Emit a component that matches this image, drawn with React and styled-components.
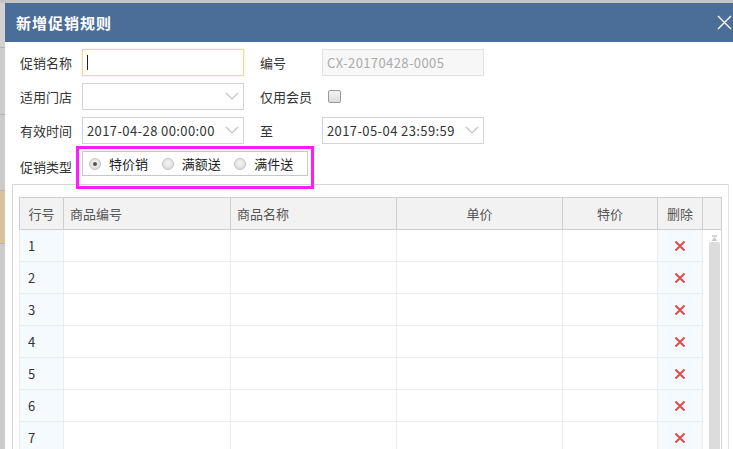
import React from "react";
import styled, { createGlobalStyle } from "styled-components";

const GlobalStyles = createGlobalStyle`
  html, body {
    margin: 0;
    padding: 0;
    overflow: hidden;
  }
  body {
    font-family: "Noto Sans CJK SC", "Noto Sans", sans-serif;
    font-size: 13px;
    color: #333;
  }
`;

const Page = styled.div`
  width: 733px;
  height: 449px;
  display: flex;
  align-items: flex-start;
  padding-top: 3px;
  box-sizing: border-box;
  background: #c4c4c4;
  overflow: hidden;
`;

const Strip = styled.div`
  width: 5px;
  flex-shrink: 0;
  display: flex;
  flex-direction: column;
  background: #d0d0d0;
`;

const StripBlock = styled.div`
  height: ${p => p.h}px;
  flex-shrink: 0;
  background: ${p => p.bg};
  border-bottom: 1px solid #b5b5b5;
`;

const Dialog = styled.div`
  width: 740px;
  flex-shrink: 0;
  background: #fff;
  display: flex;
  flex-direction: column;
  & > * {
    flex-shrink: 0;
  }
`;

const TitleBar = styled.div`
  height: 39px;
  background: #4a6e98;
  display: flex;
  align-items: center;
  justify-content: space-between;
  padding: 0 0 0 11px;
  color: #fff;
`;

const Title = styled.div`
  font-size: 15px;
  font-weight: 700;
  letter-spacing: 1px;
`;

const Close = styled.div`
  width: 28px;
  display: flex;
  align-items: center;
`;

const Form = styled.div`
  padding: 7px 0 0 15px;
  display: flex;
  flex-direction: column;
  gap: 7px;
`;

const Row = styled.div`
  display: flex;
  align-items: center;
  height: 27px;
`;

const Label = styled.div`
  width: 62px;
  flex-shrink: 0;
  color: #333;
`;

const Gap = styled.div`
  width: 16px;
`;

const Field = styled.div`
  width: 162px;
  height: 27px;
  box-sizing: border-box;
  border: 1px solid ${p => (p.focus ? "#f2d79a" : p.disabled ? "#e2e2e2" : "#d4d4d4")};
  background: ${p => (p.disabled ? "#f7f7f7" : "#fff")};
  color: ${p => (p.disabled ? "#aaa" : "#333")};
  display: flex;
  align-items: center;
  justify-content: space-between;
  padding: 0 4px 0 4px;
  font-size: 13px;
  letter-spacing: 0.4px;
  box-shadow: ${p => (p.focus ? "0 0 2px #f6e7bf" : "none")};
`;

const Caret = styled.span`
  width: 1px;
  height: 15px;
  background: #222;
`;

const Check = styled.div`
  width: 11px;
  height: 11px;
  border: 1px solid #9a9a9a;
  border-radius: 2px;
  background: linear-gradient(#f4f4f4, #dcdcdc);
  margin-left: 6px;
`;

const TypeRow = styled.div`
  display: flex;
  align-items: center;
  height: 25px;
`;

const TypeLabel = styled(Label)`
  padding-top: 5px;
`;

const RadioWrap = styled.div`
  position: relative;
`;

const RadioGroup = styled.div`
  width: 226px;
  height: 25px;
  box-sizing: border-box;
  border: 1px solid #c8c8c8;
  display: flex;
  align-items: center;
  padding-left: 6px;
`;

const RadioItem = styled.div`
  display: flex;
  align-items: center;
  width: 75px;
  color: #222;
`;

const Radio = styled.span`
  width: 12px;
  height: 12px;
  box-sizing: border-box;
  border-radius: 50%;
  border: 1px solid #c2c2c2;
  background: radial-gradient(circle at 50% 40%, #f6f6f6, #d6d6d6);
  display: inline-flex;
  align-items: center;
  justify-content: center;
  margin-right: 8px;

  &::after {
    content: "";
    width: 4px;
    height: 4px;
    border-radius: 50%;
    background: ${p => (p.checked ? "#555" : "transparent")};
  }
`;

const Highlight = styled.div`
  position: absolute;
  left: -6px;
  top: -5px;
  width: 238px;
  height: 43px;
  box-sizing: border-box;
  border: 3px solid #ff1aff;
  pointer-events: none;
  z-index: 2;
`;

const Panel = styled.div`
  margin: 8px 0 0 7px;
  width: 717px;
  height: 300px;
  box-sizing: border-box;
  border: 1px solid #d6d6d6;
  border-right-color: #e0e0e0;
  padding: 12px 0 0 6px;
`;

const Table = styled.table`
  border-collapse: collapse;
  table-layout: fixed;
  width: 702px;
  font-size: 13px;
`;

const Th = styled.th`
  height: 31px;
  background: #f2f2f2;
  border: 1px solid #cfcfcf;
  font-weight: 400;
  color: #555;
  text-align: ${p => p.align || "center"};
  padding: ${p => (p.align === "left" ? "0 0 0 6px" : "0")};
`;

const Td = styled.td`
  height: 31px;
  border: 1px solid #ececec;
  background: ${p => (p.tint ? "#f5faff" : "#fff")};
  text-align: ${p => p.align || "left"};
  padding: ${p => (p.align === "center" ? "0" : "0 0 0 8px")};
  color: #333;
  line-height: 16px;
`;

const ScrollCell = styled.td`
  border: none;
  border-left: 1px solid #ececec;
  border-right: 1px solid #d6d6d6;
  vertical-align: top;
  padding: 0;
  background: #fff;
`;

const ScrollTrack = styled.div`
  display: flex;
  flex-direction: column;
  align-items: flex-end;
  padding: 5px 1px 0 0;
`;

const Thumb = styled.div`
  width: 11px;
  height: 212px;
  background: #dcdcdc;
  border-radius: 2px 2px 0 0;
`;

const Chevron = () => (
  <svg width="14" height="9" viewBox="0 0 14 9">
    <polyline points="1,1 7,7 13,1" fill="none" stroke="#c4c4c4" strokeWidth="1.2" />
  </svg>
);

const CloseIcon = () => (
  <svg width="15" height="15" viewBox="0 0 15 15">
    <path d="M1 1 L14 14 M14 1 L1 14" stroke="#fff" strokeWidth="1.4" />
  </svg>
);

const DelIcon = () => (
  <svg width="12" height="12" viewBox="0 0 12 12" style={{ display: "block", margin: "0 auto" }}>
    <path d="M1.5 1.5 L10.5 10.5 M10.5 1.5 L1.5 10.5" stroke="#e0504f" strokeWidth="2.2" />
  </svg>
);

const ArrowUp = () => (
  <svg width="11" height="7" viewBox="0 0 11 7">
    <path d="M3 1 H8" stroke="#aaa" strokeWidth="1" />
    <path d="M5.5 2 L8.5 6 H2.5 Z" fill="#c8c8c8" />
  </svg>
);

const rows = [1, 2, 3, 4, 5, 6, 7];

const App = () => {
  return (
    <Page>
      <GlobalStyles />
      <Strip>
        <StripBlock h={44} bg="#d2d2d2" />
        <StripBlock h={66} bg="#cdcdcd" />
        <StripBlock h={75} bg="#cbcbcb" />
        <StripBlock h={52} bg="#d8c29e" />
        <StripBlock h={206} bg="#cbcbcb" />
      </Strip>
      <Dialog>
        <TitleBar>
          <Title>新增促销规则</Title>
          <Close>
            <CloseIcon />
          </Close>
        </TitleBar>

        <Form>
          <Row>
            <Label>促销名称</Label>
            <Field focus>
              <Caret />
            </Field>
            <Gap />
            <Label>编号</Label>
            <Field disabled>CX-20170428-0005</Field>
          </Row>
          <Row>
            <Label>适用门店</Label>
            <Field>
              <span />
              <Chevron />
            </Field>
            <Gap />
            <Label>仅用会员</Label>
            <Check />
          </Row>
          <Row>
            <Label>有效时间</Label>
            <Field>
              <span>2017-04-28 00:00:00</span>
              <Chevron />
            </Field>
            <Gap />
            <Label>至</Label>
            <Field>
              <span>2017-05-04 23:59:59</span>
              <Chevron />
            </Field>
          </Row>
          <TypeRow>
            <TypeLabel>促销类型</TypeLabel>
            <RadioWrap>
              <RadioGroup>
                <RadioItem>
                  <Radio checked />
                  特价销
                </RadioItem>
                <RadioItem>
                  <Radio />
                  满额送
                </RadioItem>
                <RadioItem>
                  <Radio />
                  满件送
                </RadioItem>
              </RadioGroup>
              <Highlight />
            </RadioWrap>
          </TypeRow>
        </Form>

        <Panel>
          <Table>
            <colgroup>
              <col style={{ width: 44 }} />
              <col style={{ width: 167 }} />
              <col style={{ width: 166 }} />
              <col style={{ width: 166 }} />
              <col style={{ width: 95 }} />
              <col style={{ width: 45 }} />
              <col style={{ width: 19 }} />
            </colgroup>
            <thead>
              <tr>
                <Th>行号</Th>
                <Th align="left">商品编号</Th>
                <Th align="left">商品名称</Th>
                <Th>单价</Th>
                <Th>特价</Th>
                <Th>删除</Th>
                <Th />
              </tr>
            </thead>
            <tbody>
              {rows.map((n, i) => (
                <tr key={n}>
                  <Td tint>{n}</Td>
                  <Td />
                  <Td />
                  <Td />
                  <Td />
                  <Td tint align="center">
                    <DelIcon />
                  </Td>
                  {i === 0 && (
                    <ScrollCell rowSpan={rows.length}>
                      <ScrollTrack>
                        <ArrowUp />
                        <Thumb />
                      </ScrollTrack>
                    </ScrollCell>
                  )}
                </tr>
              ))}
            </tbody>
          </Table>
        </Panel>
      </Dialog>
    </Page>
  );
};

export default App;
